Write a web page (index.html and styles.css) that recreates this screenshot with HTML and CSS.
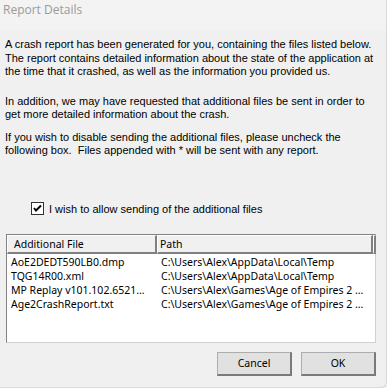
FILE: index.html
```html
<!DOCTYPE html>
<html lang="en">
<head>
    <meta charset="UTF-8">
    <title>Report Details</title>
    <link rel="stylesheet" href="styles.css">
</head>
<body>
    <div class="dialog">
        <div class="title-bar">Report Details</div>

        <div class="content">
            <!-- static text keeps the dialog's own line breaks -->
            <p class="intro first">A crash report has been generated for you, containing the files listed below.<br>The report contains detailed information about the state of the application at<br>the time that it crashed, as well as the information you provided us.</p>
            <p class="intro second">In addition, we may have requested that additional files be sent in order to<br>get more detailed information about the crash.</p>
            <p class="intro">If you wish to disable sending the additional files, please uncheck the<br>following box.&nbsp; Files appended with * will be sent with any report.</p>

            <label class="check-row">
                <span class="check-box">
                    <svg width="9" height="9" viewBox="0 0 9 9"><path d="M1 4 L3 6.5 L8 1.5" fill="none" stroke="#000" stroke-width="2"/></svg>
                </span>
                I wish to allow sending of the additional files
            </label>

            <div class="file-list">
                <div class="list-head">
                    <div class="head-cell col-file">Additional File</div>
                    <div class="head-cell col-path">Path</div>
                    <div class="head-cell col-rest"></div>
                </div>
                <div class="list-row">
                    <div class="col-file">AoE2DEDT590LB0.dmp</div>
                    <div class="col-path">C:\Users\Alex\AppData\Local\Temp</div>
                </div>
                <div class="list-row">
                    <div class="col-file">TQG14R00.xml</div>
                    <div class="col-path">C:\Users\Alex\AppData\Local\Temp</div>
                </div>
                <div class="list-row">
                    <div class="col-file">MP Replay v101.102.6521...</div>
                    <div class="col-path">C:\Users\Alex\Games\Age of Empires 2 ...</div>
                </div>
                <div class="list-row">
                    <div class="col-file">Age2CrashReport.txt</div>
                    <div class="col-path">C:\Users\Alex\Games\Age of Empires 2 ...</div>
                </div>
            </div>

            <div class="buttons">
                <button class="btn">Cancel</button>
                <button class="btn">OK</button>
            </div>
        </div>
    </div>
</body>
</html>
```

FILE: styles.css
```css
body {
    margin: 0;
    background-color: #f0f0f0;
    font-family: "Liberation Sans", Arial, sans-serif;
    font-size: 11px;
    color: #000;
}
.dialog {
    width: 387px;
    height: 388px;
    box-sizing: border-box;
    border-right: 1px solid #d8d8d8;
    border-bottom: 1px solid #d8d8d8;
    border-bottom-right-radius: 6px;
    background-color: #f0f0f0;
    overflow: hidden;
}
.title-bar {
    height: 30px;
    box-sizing: border-box;
    padding: 1px 0 0 3px;
    background-color: #f3f3f3;
    color: #9a9a9a;
    font-family: "Open Sans", sans-serif;
    font-size: 12px;
}
.content {
    padding: 8px 6px 0 5px;
}
.intro {
    margin: 0;
    white-space: nowrap;
    line-height: 13.5px;
}
.intro.first {
    margin-bottom: 16px;
}
.intro.second {
    margin-bottom: 9px;
}
.check-row {
    display: flex;
    align-items: center;
    gap: 5px;
    margin: 44px 0 0 26px;
    height: 14px;
}
.check-box {
    width: 11px;
    height: 11px;
    border: 1px solid #333;
    background-color: #fff;
    display: flex;
    align-items: center;
    justify-content: center;
}
.file-list {
    margin: 18px 4px 0 1px;
    height: 109px;
    box-sizing: border-box;
    border: 1px solid #828282;
    border-right-color: #d0d0d0;
    border-bottom-color: #d0d0d0;
    background-color: #fff;
    font-family: "Noto Sans", sans-serif;
    font-size: 10.5px;
}
.list-head {
    display: flex;
    height: 19px;
    line-height: 15px;
    background-color: #f0f0f0;
    margin-bottom: 1px;
}
.head-cell {
    box-sizing: border-box;
    border-top: 1px solid #fff;
    border-left: 1px solid #fff;
    border-right: 2px solid #808080;
    border-bottom: 2px solid #808080;
    padding: 1px 0 0 6px;
}
.head-cell.col-path {
    padding-left: 2px;
}
.col-file {
    width: 150px;
    flex-shrink: 0;
}
.col-path {
    width: 216px;
    flex-shrink: 0;
}
.col-rest {
    width: 3px;
    padding: 0;
}
.list-row {
    display: flex;
    height: 14px;
    line-height: 14px;
    padding-left: 4px;
}
.list-row .col-file {
    width: 148px;
    white-space: nowrap;
}
.list-row .col-path {
    padding-left: 2px;
    white-space: nowrap;
}
.buttons {
    display: flex;
    justify-content: flex-end;
    gap: 9px;
    margin: 9px 4px 0 0;
}
.btn {
    width: 75px;
    height: 24px;
    background-color: #e1e1e1;
    border: 1px solid #adadad;
    border-right: 2px solid #7a7a7a;
    border-bottom: 2px solid #7a7a7a;
    font-family: "Noto Sans", sans-serif;
    font-size: 10.5px;
    color: #000;
    padding: 0;
}
```
